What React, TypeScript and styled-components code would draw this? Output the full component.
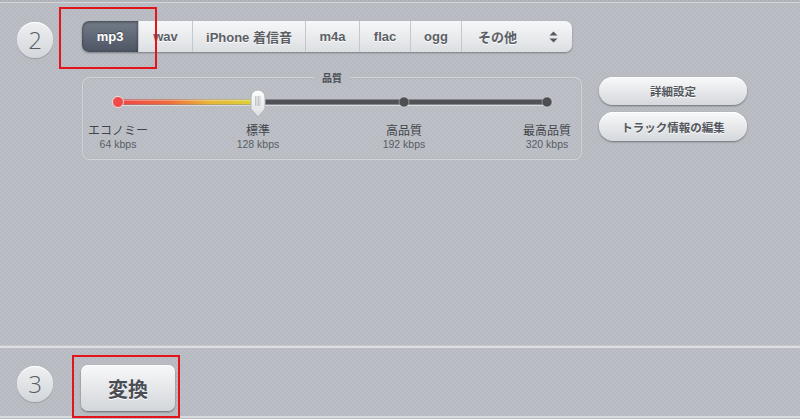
import React from 'react';
import styled, { createGlobalStyle } from 'styled-components';

const GlobalStyle = createGlobalStyle`
  html, body {
    margin: 0;
    padding: 0;
    background: #b9bdc3;
  }
`;

const latin = `"Liberation Sans", "Noto Sans CJK JP", sans-serif`;

const Page = styled.div`
  width: 800px;
  height: 419px;
  overflow: hidden;
  display: flex;
  flex-direction: column;
  background-color: #b9bdc3;
  background-image: repeating-conic-gradient(
    rgba(255, 255, 255, 0.035) 0 25%,
    rgba(0, 0, 0, 0.015) 0 50%
  );
  background-size: 4px 4px;
  font-family: ${latin};
`;

const TopEdge = styled.div`
  height: 2px;
  border-bottom: 1px solid rgba(255, 255, 255, 0.45);
  background: rgba(0, 0, 0, 0.04);
`;

const Step = styled.section<{ $height: number; $top: number }>`
  height: ${({ $height }) => $height}px;
  display: flex;
  align-items: flex-start;
  padding: ${({ $top }) => $top}px 0 0 17px;
  box-sizing: border-box;
`;

const LastStep = styled(Step)`
  border-bottom: 2px solid rgba(255, 255, 255, 0.45);
`;

const Divider = styled.div`
  height: 2px;
  border-top: 1px solid rgba(0, 0, 0, 0.1);
  background: rgba(255, 255, 255, 0.5);
`;

const Badge = styled.div`
  width: 36px;
  height: 36px;
  margin-top: 1px;
  border-radius: 50%;
  flex: none;
  display: flex;
  align-items: center;
  justify-content: center;
  background: linear-gradient(#eef0f2, #d3d6da);
  box-shadow: 0 1px 1px rgba(0, 0, 0, 0.18), inset 0 1px 0 #fff;
  color: #595d63;
  font-family: "Open Sans", ${latin};
  font-size: 24px;
  font-weight: 300;
  line-height: 1;
`;

const Body = styled.div<{ $gap: number }>`
  margin-left: ${({ $gap }) => $gap}px;
  display: flex;
  flex-direction: column;
`;

const Highlight = styled.div<{ $t: number; $r: number; $b: number; $l: number }>`
  position: relative;
  display: flex;
  &::after {
    content: '';
    position: absolute;
    top: ${({ $t }) => -$t}px;
    right: ${({ $r }) => -$r}px;
    bottom: ${({ $b }) => -$b}px;
    left: ${({ $l }) => -$l}px;
    border: 2px solid #e3141a;
    pointer-events: none;
  }
`;

const FormatBar = styled.div`
  display: flex;
  height: 31px;
  width: 490px;
  border-radius: 7px;
  background: linear-gradient(#f6f7f8, #dcdfe2);
  box-shadow: 0 1px 2px rgba(0, 0, 0, 0.35);
`;

const Tab = styled.div<{ $w: number; $active?: boolean }>`
  width: ${({ $w }) => $w}px;
  flex: none;
  display: flex;
  align-items: center;
  justify-content: center;
  box-sizing: border-box;
  font-size: 13px;
  font-weight: bold;
  color: ${({ $active }) => ($active ? '#fff' : '#5b5f65')};
  text-shadow: ${({ $active }) =>
    $active ? '0 -1px 0 rgba(0,0,0,0.35)' : '0 1px 0 #fff'};
  background: ${({ $active }) =>
    $active ? 'linear-gradient(#737c89, #4d5563)' : 'transparent'};
  box-shadow: ${({ $active }) =>
    $active ? 'inset 0 1px 3px rgba(0,0,0,0.45)' : 'none'};
  border-left: ${({ $active }) => ($active ? 'none' : '1px solid #c4c7cb')};
  border-radius: ${({ $active }) => ($active ? '7px 0 0 7px' : '0')};
`;

const SelectTab = styled(Tab)`
  justify-content: space-between;
  padding: 0 14px 0 16px;
  border-radius: 0 7px 7px 0;
`;

const Arrows = styled.svg`
  display: block;
`;

const Controls = styled.div`
  display: flex;
  align-items: flex-start;
  margin-top: 25px;
`;

const QualityPanel = styled.div`
  position: relative;
  width: 500px;
  height: 83px;
  box-sizing: border-box;
  border: 1px solid rgba(255, 255, 255, 0.32);
  border-radius: 8px;
  background: rgba(255, 255, 255, 0.04);
  box-shadow: inset 0 0 0 1px rgba(0, 0, 0, 0.03);
`;

const Legend = styled.div`
  position: absolute;
  top: -7px;
  left: 50%;
  transform: translateX(-50%);
  padding: 0 8px;
  background: #babec4;
  font-family: "Noto Sans CJK JP", sans-serif;
  font-size: 10px;
  font-weight: bold;
  line-height: 14px;
  color: #4c5056;
`;

const Track = styled.svg`
  display: block;
  margin: 12px 0 0 29px;
`;

const StopRow = styled.div`
  display: grid;
  grid-template-columns: 140px 146px 143px 0;
  padding-left: 35px;
  margin-top: 3px;
`;

const Stop = styled.div`
  width: 0;
  display: flex;
  flex-direction: column;
  align-items: center;
  white-space: nowrap;
`;

const StopName = styled.div`
  font-family: "Noto Sans CJK JP", sans-serif;
  font-size: 12px;
  line-height: 14px;
  color: #40444a;
`;

const StopRate = styled.div`
  font-size: 10.5px;
  line-height: 14px;
  color: #595d63;
`;

const SideButtons = styled.div`
  margin-left: 17px;
  display: flex;
  flex-direction: column;
  gap: 7px;
`;

const PillButton = styled.button<{ $h: number }>`
  width: 148px;
  height: ${({ $h }) => $h}px;
  border: none;
  border-radius: 15px;
  background: linear-gradient(#f8f9fa, #d5d8dc);
  box-shadow: 0 1px 2px rgba(0, 0, 0, 0.4), inset 0 1px 0 #fff;
  font-family: "Noto Sans CJK JP", sans-serif;
  font-size: 11.5px;
  font-weight: bold;
  color: #54585e;
  text-shadow: 0 1px 0 #fff;
  padding: 0;
`;

const ConvertButton = styled.button`
  width: 94px;
  height: 46px;
  border: none;
  border-radius: 7px;
  background: linear-gradient(#f7f8f9, #d3d6da);
  box-shadow: 0 1px 2px rgba(0, 0, 0, 0.45), inset 0 1px 0 #fff;
  font-family: "Noto Sans CJK JP", sans-serif;
  font-size: 20px;
  font-weight: bold;
  color: #4a4e54;
  text-shadow: 0 1px 0 #fff;
  padding: 0;
`;

const formats = [
  { label: 'wav', w: 54 },
  { label: 'iPhone 着信音', w: 113 },
  { label: 'm4a', w: 54 },
  { label: 'flac', w: 51 },
  { label: 'ogg', w: 51 },
];

const stops = [
  { name: 'エコノミー', rate: '64 kbps' },
  { name: '標準', rate: '128 kbps' },
  { name: '高品質', rate: '192 kbps' },
  { name: '最高品質', rate: '320 kbps' },
];

const QualitySlider = () => (
  <Track width="442" height="30" viewBox="0 0 442 30">
    <defs>
      <linearGradient id="fill" x1="0" x2="1" y1="0" y2="0">
        <stop offset="0" stopColor="#ee4444" />
        <stop offset="0.35" stopColor="#ee6a3c" />
        <stop offset="0.65" stopColor="#e9b43a" />
        <stop offset="1" stopColor="#d9d53a" />
      </linearGradient>
      <linearGradient id="thumb" x1="0" x2="0" y1="0" y2="1">
        <stop offset="0" stopColor="#ffffff" />
        <stop offset="1" stopColor="#dcdddf" />
      </linearGradient>
    </defs>
    <line x1="6" x2="435" y1="15.5" y2="15.5" stroke="rgba(255,255,255,0.45)" />
    <rect x="6" y="9.5" width="429" height="5" rx="2.5" fill="#505256" />
    <rect x="6" y="9.5" width="140" height="5" fill="url(#fill)" />
    <rect x="6" y="9.5" width="140" height="1.5" fill="rgba(255,255,255,0.3)" />
    <circle cx="292" cy="12" r="5" fill="#4d4f53" stroke="rgba(255,255,255,0.35)" />
    <circle cx="435" cy="12" r="5" fill="#4d4f53" stroke="rgba(255,255,255,0.35)" />
    <circle cx="6" cy="12" r="5.5" fill="#f04a4a" stroke="rgba(255,255,255,0.7)" />
    <g transform="translate(138 0)">
      <path
        d="M1 7 A7 7 0 0 1 15 7 L15 19 L8 27 L1 19 Z"
        fill="url(#thumb)"
        stroke="#b0b2b6"
        strokeWidth="1"
      />
      <g stroke="#b9bbbf" strokeWidth="0.8">
        <line x1="5.5" x2="5.5" y1="6" y2="16" />
        <line x1="7" x2="7" y1="6" y2="16" />
        <line x1="8.5" x2="8.5" y1="6" y2="16" />
        <line x1="10" x2="10" y1="6" y2="16" />
      </g>
    </g>
  </Track>
);

const App = () => {
  return (
    <Page>
      <GlobalStyle />
      <TopEdge />
      <Step $height={342} $top={18}>
        <Badge>2</Badge>
        <Body $gap={29}>
          <FormatBar>
            <Highlight $t={14} $r={19} $b={17} $l={23}>
              <Tab $w={56} $active>
                mp3
              </Tab>
            </Highlight>
            {formats.map((f) => (
              <Tab key={f.label} $w={f.w}>
                {f.label}
              </Tab>
            ))}
            <SelectTab $w={111}>
              <span>その他</span>
              <Arrows width="9" height="12" viewBox="0 0 9 12">
                <path d="M4.5 0.5 L8.5 4.5 H0.5 Z" fill="#55595f" />
                <path d="M4.5 11.5 L8.5 7.5 H0.5 Z" fill="#55595f" />
              </Arrows>
            </SelectTab>
          </FormatBar>
          <Controls>
            <QualityPanel>
              <Legend>品質</Legend>
              <QualitySlider />
              <StopRow>
                {stops.map((s) => (
                  <Stop key={s.name}>
                    <StopName>{s.name}</StopName>
                    <StopRate>{s.rate}</StopRate>
                  </Stop>
                ))}
              </StopRow>
            </QualityPanel>
            <SideButtons>
              <PillButton $h={28}>詳細設定</PillButton>
              <PillButton $h={29}>トラック情報の編集</PillButton>
            </SideButtons>
          </Controls>
        </Body>
      </Step>
      <Divider />
      <LastStep $height={70} $top={17}>
        <Badge>3</Badge>
        <Body $gap={28}>
          <Highlight $t={10} $r={5} $b={7} $l={9}>
            <ConvertButton>変換</ConvertButton>
          </Highlight>
        </Body>
      </LastStep>
    </Page>
  );
};

export default App;
